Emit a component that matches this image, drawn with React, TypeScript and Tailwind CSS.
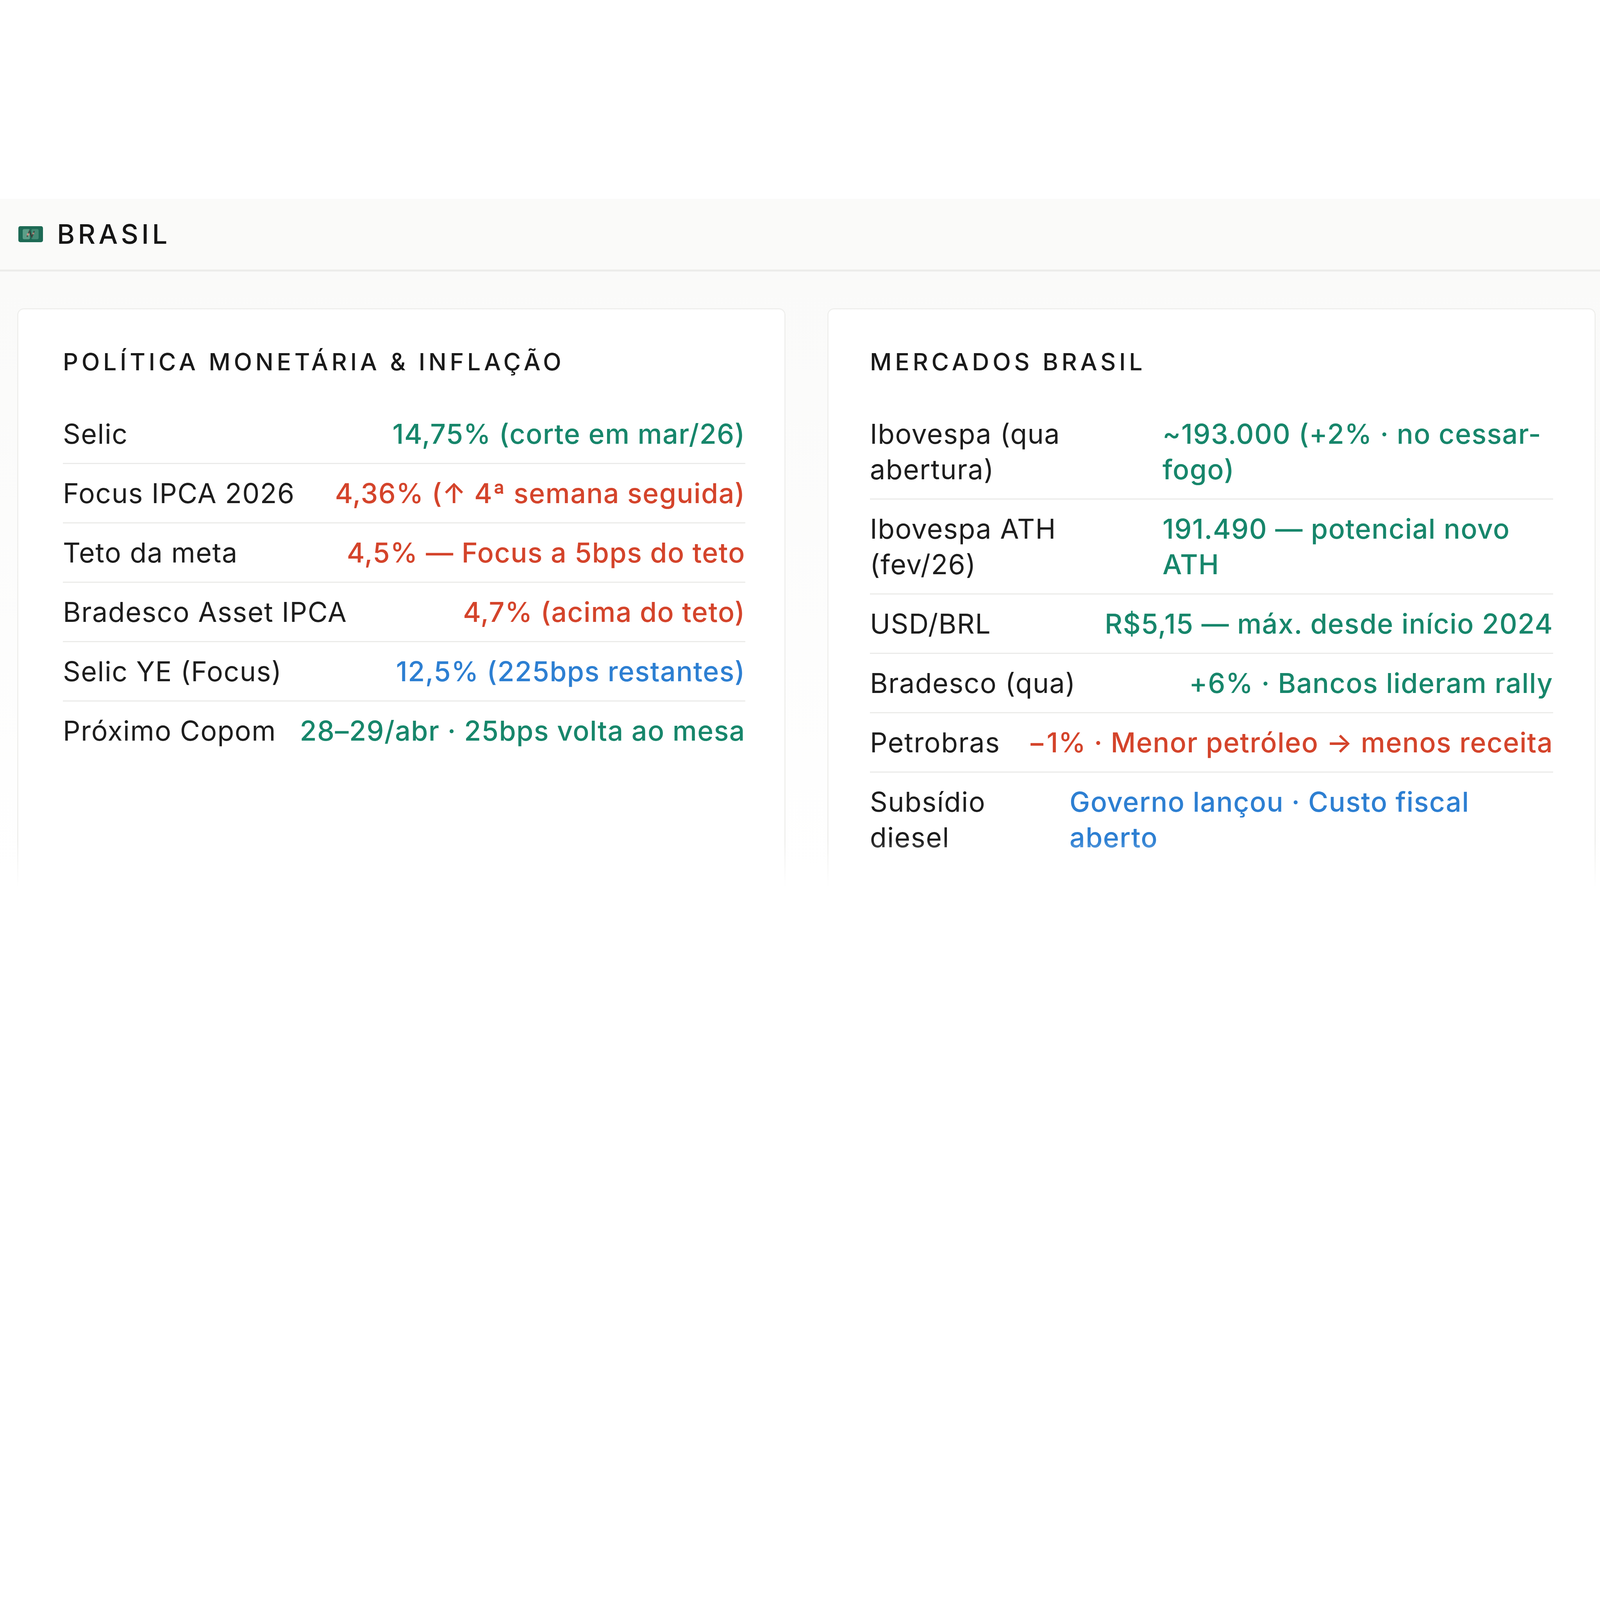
import React from 'react';

type Tone = 'green' | 'red' | 'blue';

interface Row {
  label: string;
  value: string;
  tone: Tone;
  // linhas que quebram: largura fixa do rótulo e do valor
  labelW?: string;
  valueW?: string;
}

const toneClass: Record<Tone, string> = {
  green: 'text-[#17866b]',
  red: 'text-[#d4442b]',
  blue: 'text-[#2d7fd2]',
};

const politica: Row[] = [
  { label: 'Selic', value: '14,75% (corte em mar/26)', tone: 'green' },
  { label: 'Focus IPCA 2026', value: '4,36% (↑ 4ª semana seguida)', tone: 'red' },
  { label: 'Teto da meta', value: '4,5% — Focus a 5bps do teto', tone: 'red' },
  { label: 'Bradesco Asset IPCA', value: '4,7% (acima do teto)', tone: 'red' },
  { label: 'Selic YE (Focus)', value: '12,5% (225bps restantes)', tone: 'blue' },
  { label: 'Próximo Copom', value: '28–29/abr · 25bps volta ao mesa', tone: 'green' },
];

const mercados: Row[] = [
  {
    label: 'Ibovespa (qua abertura)',
    value: '~193.000 (+2% · no cessar-fogo)',
    tone: 'green',
    labelW: 'w-[555px]',
    valueW: 'w-[1000px] pr-[15px]',
  },
  {
    label: 'Ibovespa ATH (fev/26)',
    value: '191.490 — potencial novo ATH',
    tone: 'green',
    labelW: 'w-[555px]',
    valueW: 'w-[1000px] pr-[15px]',
  },
  { label: 'USD/BRL', value: 'R$5,15 — máx. desde início 2024', tone: 'green' },
  { label: 'Bradesco (qua)', value: '+6% · Bancos lideram rally', tone: 'green' },
  { label: 'Petrobras', value: '−1% · Menor petróleo → menos receita', tone: 'red' },
  {
    label: 'Subsídio diesel',
    value: 'Governo lançou · Custo fiscal aberto',
    tone: 'blue',
    labelW: 'w-[395px]',
    valueW: 'w-[1238px]',
  },
];

function FlagIcon() {
  return (
    <svg width="63" height="41" viewBox="0 0 102 66" className="shrink-0">
      <rect x="0" y="0" width="102" height="66" rx="8" fill="#1d6a55" />
      <rect x="18" y="12" width="30" height="42" rx="6" fill="#8fc9b3" opacity="0.55" />
      <rect x="54" y="12" width="30" height="42" rx="6" fill="#8fc9b3" opacity="0.35" />
      <path d="M36 44 L46 20 L56 44 L66 20" stroke="#3a2a2a" strokeWidth="5" fill="none" opacity="0.7" />
      <circle cx="40" cy="34" r="5" fill="#e39a8c" opacity="0.8" />
      <circle cx="62" cy="30" r="4" fill="#e39a8c" opacity="0.7" />
    </svg>
  );
}

function DataRow({ row, last }: { row: Row; last: boolean }) {
  return (
    <div
      className={`flex justify-between items-start gap-[37px] py-[29px] leading-[91px] ${
        last ? '' : 'border-b-[3px] border-[#ebebe9]'
      }`}
    >
      <span className={`text-[#1d1d1d] ${row.labelW ?? 'shrink-0'}`}>{row.label}</span>
      <span
        className={`font-medium ${toneClass[row.tone]} ${
          row.valueW ? `${row.valueW} shrink-0 text-left` : 'text-right'
        }`}
      >
        {row.value}
      </span>
    </div>
  );
}

function Card({ title, rows, pad }: { title: string; rows: Row[]; pad: string }) {
  return (
    <div
      className={`bg-white rounded-t-[17px] border-[3px] border-b-0 border-[#efefed] pt-[104px] h-[1481px] [mask-image:linear-gradient(to_bottom,black_92%,transparent)] ${pad}`}
    >
      <h2 className="text-[61px] leading-none tracking-[0.14em] font-medium text-[#1a1a1a]">
        {title}
      </h2>
      <div className="mt-[79px] text-[70px] tracking-[0.02em]">
        {rows.map((row, i) => (
          <DataRow key={row.label} row={row} last={i === rows.length - 1} />
        ))}
      </div>
    </div>
  );
}

export default function App() {
  return (
    <div className="w-full h-screen bg-white pt-[509px] font-[Inter,'Liberation_Sans',sans-serif] overflow-hidden">
      <div className="h-[186px] bg-[#fafaf9] border-b-[5px] border-[#ececea] flex items-center gap-[36px] pl-[47px]">
        <FlagIcon />
        <span className="text-[69px] leading-none tracking-[0.12em] font-medium text-[#151515]">
          BRASIL
        </span>
      </div>
      <div className="grid grid-cols-2 gap-[107px] pl-[44px] pr-[11px] pt-[94px] bg-linear-to-b from-[#fafaf9] to-white">
        <Card title="POLÍTICA MONETÁRIA & INFLAÇÃO" rows={politica} pad="pl-[114px] pr-[100px]" />
        <Card title="MERCADOS BRASIL" rows={mercados} pad="pl-[106px] pr-[106px]" />
      </div>
    </div>
  );
}
